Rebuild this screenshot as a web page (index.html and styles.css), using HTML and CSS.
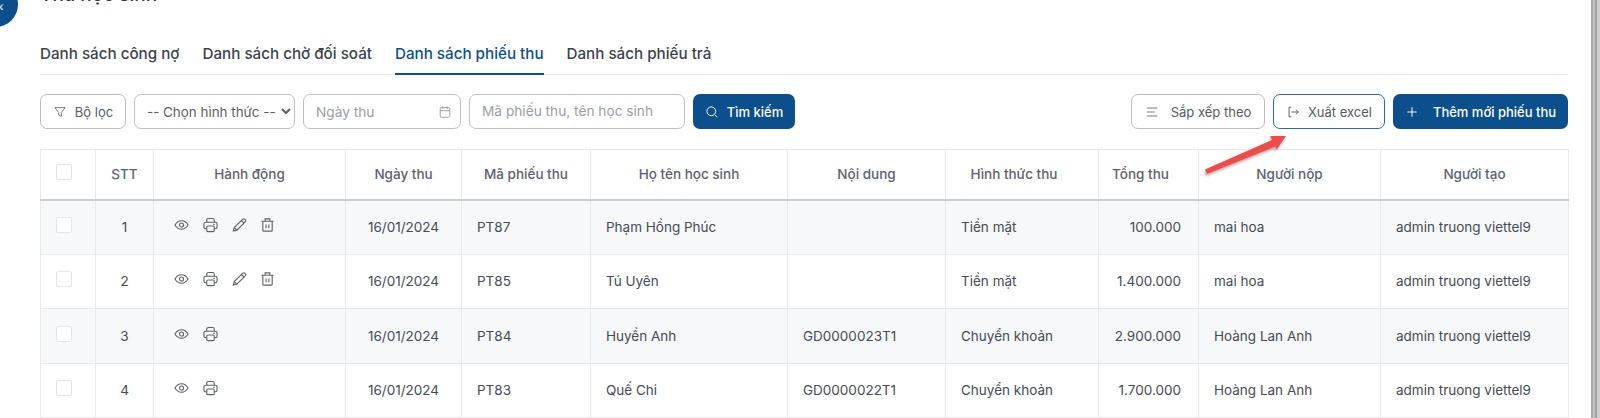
FILE: index.html
```html
<!DOCTYPE html>
<html lang="vi">
<head>
<meta charset="utf-8">
<title>Thu học sinh</title>
<link rel="stylesheet" href="styles.css">
</head>
<body>
<svg class="sprite" width="0" height="0" aria-hidden="true">
  <symbol id="i-eye" viewBox="0 0 16 16"><path d="M1 8c1.800-3 4.200-4.500 7-4.500S13.200 5 15 8c-1.800 3-4.200 4.500-7 4.500S2.800 11 1 8z"/><circle cx="8" cy="8" r="2.200"/></symbol>
  <symbol id="i-print" viewBox="0 0 16 16"><path d="M4 5V2.800C4 1.800 4.700 1 5.700 1h4.600c1 0 1.700.8 1.700 1.800V5"/><path d="M4 12H2.800C1.800 12 1 11.200 1 10.200V7c0-1.100.9-2 2-2h10c1.100 0 2 .9 2 2v3.200c0 1-.8 1.800-1.800 1.800H12"/><rect x="4" y="9" width="8" height="6" rx="1.200"/><path d="M11 7.300h1.500"/></symbol>
  <symbol id="i-pen" viewBox="0 0 16 16"><path d="M1.500 14.500l.9-3.700L11.300 1.900c.7-.7 1.800-.7 2.500 0l.3.3c.7.7.7 1.800 0 2.500L5.200 13.600z"/><path d="M2.400 10.800l2.800 2.800M10 3.200l2.800 2.800"/></symbol>
  <symbol id="i-trash" viewBox="0 0 16 16"><path d="M1.500 4h13M5.500 4V1.500h5V4M3 4v9.500c0 .6.500 1 1 1h8c.6 0 1-.4 1-1V4M6.500 7.500v4M9.500 7.500v4"/></symbol>
</svg>

<div class="back-badge"><span class="back-glyph">‹</span></div>

<main class="page">
  <h1 class="title">Thu học sinh</h1>

  <nav class="tabs">
    <a class="tab">Danh sách công nợ</a>
    <a class="tab">Danh sách chờ đối soát</a>
    <a class="tab tab-active">Danh sách phiếu thu</a>
    <a class="tab">Danh sách phiếu trả</a>
  </nav>

  <div class="toolbar">
    <div class="filters">
      <button class="btn btn-outline btn-filter">
        <svg class="ico" viewBox="0 0 16 16"><path d="M2 3h12L9.500 8.500V13l-3-1.500v-3z"/></svg>
        Bộ lọc
      </button>
      <select class="field select">
        <option>-- Chọn hình thức --</option>
      </select>
      <div class="field date">
        <span>Ngày thu</span>
        <svg class="ico" viewBox="0 0 16 16"><rect x="2.500" y="3" width="11" height="11" rx="1.500"/><path d="M2.500 6.500h11M5.500 1.500v3M10.500 1.500v3"/></svg>
      </div>
      <div class="field search">Mã phiếu thu, tên học sinh</div>
      <button class="btn btn-primary btn-search">
        <svg class="ico" viewBox="0 0 16 16"><circle cx="7.200" cy="7.200" r="5"/><path d="M11 11l3 3"/></svg>
        Tìm kiếm
      </button>
    </div>
    <div class="actions">
      <button class="btn btn-outline btn-sort">
        <svg class="ico" viewBox="0 0 16 16"><path d="M2 3.500h12M2 8h9M2 12.500h12"/></svg>
        Sắp xếp theo
      </button>
      <button class="btn btn-export">
        <svg class="ico" viewBox="0 0 16 16"><path d="M6 2.500H3.500v11H6M6.500 8h7.500M11.500 5.500L14 8l-2.500 2.500"/></svg>
        Xuất excel
      </button>
      <button class="btn btn-primary btn-add">
        <svg class="ico" viewBox="0 0 16 16"><path d="M8 2.500v11M2.500 8h11"/></svg>
        Thêm mới phiếu thu
      </button>
    </div>
  </div>

  <table class="grid">
    <colgroup>
      <col class="c1"><col class="c2"><col class="c3"><col class="c4"><col class="c5"><col class="c6"><col class="c7"><col class="c8"><col class="c9"><col class="c10"><col class="c11">
    </colgroup>
    <thead>
      <tr>
        <th><span class="check"></span></th>
        <th>STT</th><th>Hành động</th><th>Ngày thu</th><th>Mã phiếu thu</th><th>Họ tên học sinh</th><th>Nội dung</th><th class="off">Hình thức thu</th><th class="off">Tổng thu</th><th>Người nộp</th><th>Người tạo</th>
      </tr>
    </thead>
    <tbody>
      <tr>
        <td><span class="check"></span></td>
        <td class="mid">1</td>
        <td><div class="acts"><svg class="act"><use href="#i-eye"/></svg><svg class="act"><use href="#i-print"/></svg><svg class="act"><use href="#i-pen"/></svg><svg class="act"><use href="#i-trash"/></svg></div></td>
        <td class="mid">16/01/2024</td><td>PT87</td><td>Phạm Hồng Phúc</td><td></td><td>Tiền mặt</td><td class="num">100.000</td><td>mai hoa</td><td>admin truong viettel9</td>
      </tr>
      <tr>
        <td><span class="check"></span></td>
        <td class="mid">2</td>
        <td><div class="acts"><svg class="act"><use href="#i-eye"/></svg><svg class="act"><use href="#i-print"/></svg><svg class="act"><use href="#i-pen"/></svg><svg class="act"><use href="#i-trash"/></svg></div></td>
        <td class="mid">16/01/2024</td><td>PT85</td><td>Tú Uyên</td><td></td><td>Tiền mặt</td><td class="num">1.400.000</td><td>mai hoa</td><td>admin truong viettel9</td>
      </tr>
      <tr>
        <td><span class="check"></span></td>
        <td class="mid">3</td>
        <td><div class="acts"><svg class="act"><use href="#i-eye"/></svg><svg class="act"><use href="#i-print"/></svg></div></td>
        <td class="mid">16/01/2024</td><td>PT84</td><td>Huyền Anh</td><td>GD0000023T1</td><td>Chuyển khoản</td><td class="num">2.900.000</td><td>Hoàng Lan Anh</td><td>admin truong viettel9</td>
      </tr>
      <tr>
        <td><span class="check"></span></td>
        <td class="mid">4</td>
        <td><div class="acts"><svg class="act"><use href="#i-eye"/></svg><svg class="act"><use href="#i-print"/></svg></div></td>
        <td class="mid">16/01/2024</td><td>PT83</td><td>Quế Chi</td><td>GD0000022T1</td><td>Chuyển khoản</td><td class="num">1.700.000</td><td>Hoàng Lan Anh</td><td>admin truong viettel9</td>
      </tr>
    </tbody>
  </table>
</main>

<svg class="arrow" viewBox="0 0 90 50" aria-hidden="true">
  <defs><filter id="sh" x="-20%" y="-30%" width="140%" height="170%"><feDropShadow dx="-1" dy="2" stdDeviation="1.500" flood-color="#000" flood-opacity=".35"/></filter></defs>
  <path filter="url(#sh)" d="M5 39.500L72 10 70.200 6H86L76.700 19.500 75.500 16.500 7 44z" fill="#ee4c4c"/>
</svg>

<div class="frame"></div>
</body>
</html>
```

FILE: styles.css
```css
* { box-sizing: border-box; }
html, body { margin: 0; height: 418px; overflow: hidden; background: #fff; }
body { font-family: Inter, "Liberation Sans", sans-serif; color: #444b55; font-size: 13px; position: relative; }
.sprite { position: absolute; }

.back-badge { position: absolute; left: -27px; top: -18px; width: 45px; height: 45px; border-radius: 50%; background: #0b4f8c; color: #fff; }
.back-glyph { position: absolute; left: 26px; top: 19px; font-size: 12px; line-height: 12px; }

.page { padding: 0 32px 0 40px; width: 1600px; margin-top: -16px; }
.title { margin: 0; font-size: 19px; line-height: 22px; font-weight: 500; color: #2f3640; }

.tabs { display: flex; gap: 23px; margin-top: 36px; height: 33px; border-bottom: 1px solid #e8eaed; }
.tab { height: 33px; padding-top: 1px; font-size: 15.200px; line-height: 22px; font-weight: 500; color: #3c424b; }
.tab-active { color: #0b4f8c; border-bottom: 2px solid #0b4f8c; }

.toolbar { display: flex; justify-content: space-between; margin-top: 19px; height: 35px; }
.filters, .actions { display: flex; gap: 8px; }
.btn { display: flex; align-items: center; justify-content: center; height: 35px; border-radius: 7px; font: 400 13px Inter, "Liberation Sans", sans-serif; background: #fff; padding: 0; }
.btn-outline { border: 1px solid #b9bcc0; color: #555b64; }
.btn-primary { border: 0; background: #0b4f8c; color: #fff; font-weight: 500; }
.btn-export { border: 1px solid #2d6aa3; color: #555b64; }
.ico { width: 14px; height: 14px; fill: none; stroke: currentColor; stroke-width: 1.100; flex: none; }
.btn-filter { width: 86px; gap: 8px; }
.btn-filter .ico { color: #777; }
.btn-search { width: 102px; gap: 8px; }
.btn-sort { width: 134px; gap: 12px; }
.btn-sort .ico { color: #777; }
.btn-export { width: 112px; gap: 8px; }
.btn-add { width: 175px; gap: 14px; font-size: 13px; }

.field { height: 35px; border: 1px solid #bdbfc3; border-radius: 7px; background: #fff; color: #9a9ea4; font: 400 13.700px Inter, "Liberation Sans", sans-serif; }
.select { width: 161px; padding: 0 0 0 8px; color: #5b6068; font-size: 13.400px; }
.date { width: 158px; display: flex; align-items: center; justify-content: space-between; padding: 0 8px 0 12px; }
.search { width: 216px; padding: 0 12px; line-height: 33px; }

.grid { width: 1528px; margin-top: 20px; border-collapse: collapse; table-layout: fixed; font-size: 13.500px; }
.c1 { width: 55px; } .c2 { width: 58px; } .c3 { width: 192px; } .c4 { width: 116px; } .c5 { width: 129px; }
.c6 { width: 197px; } .c7 { width: 158px; } .c8 { width: 153px; } .c9 { width: 100px; } .c10 { width: 182px; } .c11 { width: 188px; }
.grid th, .grid td { border: 1px solid #e7e9ec; padding: 0 15px; }
.grid th { height: 50px; font-weight: 500; text-align: center; color: #5b6270; border-bottom: 2px solid #c9ccd0; }
.grid th.off { padding: 0 23px 0 7px; }
.grid td { height: 54.500px; color: #444b55; }
.grid tbody tr:nth-child(odd) td { background: #f7f8fa; }
.grid .mid { text-align: center; }
.grid .num { text-align: right; padding-right: 17px; }
.check { display: block; width: 16px; height: 16px; margin: -4px 0 0; border: 1px solid #e3e5e8; border-radius: 2px; background: #fff; }
.acts { display: flex; gap: 13.800px; margin: -4px 0 0 5px; }
.act { width: 15px; height: 16px; fill: none; stroke: #5e636b; stroke-width: 1.200; flex: none; }

.arrow { position: absolute; left: 1200px; top: 130px; width: 90px; height: 50px; }
.frame { position: absolute; right: 0; top: 0; bottom: 0; width: 9px; background: linear-gradient(90deg, #a8a8a8 0 2px, #c4c4c4 2px 4px, #a0a0a0 4px 6px, #cfcfcf 6px 9px); }
```
